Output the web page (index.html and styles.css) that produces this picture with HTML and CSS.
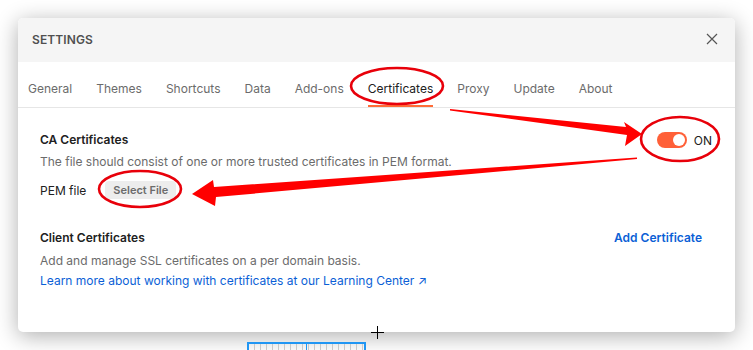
FILE: index.html
```html
<!DOCTYPE html>
<html lang="en">
<head>
    <meta charset="UTF-8">
    <meta name="viewport" content="width=device-width, initial-scale=1.0">
    <title>Settings - Certificates</title>
    <link rel="stylesheet" href="styles.css">
</head>
<body>

<div class="stage">
    <div class="modal">
        <div class="modal-header">
            <span class="modal-title">SETTINGS</span>
            <svg class="close-icon" width="12" height="12" viewBox="0 0 12 12">
                <path d="M1 1 L11 11 M11 1 L1 11" stroke="#555" stroke-width="1.2" fill="none"/>
            </svg>
        </div>

        <div class="tabs">
            <span class="tab">General</span>
            <span class="tab">Themes</span>
            <span class="tab">Shortcuts</span>
            <span class="tab">Data</span>
            <span class="tab">Add-ons</span>
            <span class="tab active">Certificates</span>
            <span class="tab">Proxy</span>
            <span class="tab">Update</span>
            <span class="tab">About</span>
        </div>

        <div class="content">
            <!-- CA certificates -->
            <div class="section">
                <div class="section-row">
                    <div>
                        <div class="section-title">CA Certificates</div>
                        <div class="section-desc">The file should consist of one or more trusted certificates in PEM format.</div>
                    </div>
                    <div class="toggle-wrap">
                        <span class="toggle"><span class="knob"></span></span>
                        <span class="toggle-label">ON</span>
                    </div>
                </div>
                <div class="pem-row">
                    <span class="pem-label">PEM file</span>
                    <span class="select-btn">Select File</span>
                </div>
            </div>

            <!-- Client certificates -->
            <div class="section client">
                <div class="section-row">
                    <div class="section-title">Client Certificates</div>
                    <span class="add-link">Add Certificate</span>
                </div>
                <div class="section-desc">Add and manage SSL certificates on a per domain basis.</div>
                <div class="learn-link">Learn more about working with certificates at our Learning Center &#8599;</div>
            </div>
        </div>
    </div>
</div>

<div class="ruler"></div>
<div class="cursor"></div>

<!-- red annotations drawn on top of the screenshot -->
<svg class="annotations" width="753" height="350" viewBox="0 0 753 350">
    <ellipse cx="397" cy="86" rx="46" ry="18" fill="none" stroke="#e8000a" stroke-width="2.6"/>
    <ellipse cx="680" cy="139" rx="39" ry="22" fill="none" stroke="#e8000a" stroke-width="2.6"/>
    <ellipse cx="140" cy="189" rx="41" ry="18" fill="none" stroke="#e8000a" stroke-width="2.6"/>
    <polygon points="450,109 626,127 624,122 642,134 625,146 627,135 450,110.5" fill="#f00"/>
    <polygon points="637,157.5 214,187 213,180 192,194 215,206 216,197 637,159" fill="#f00"/>
</svg>

</body>
</html>
```

FILE: styles.css
```css
/* General Reset */
* {
    margin: 0;
    padding: 0;
    box-sizing: border-box;
}

body {
    width: 753px;
    height: 350px;
    overflow: hidden;
    position: relative;
    background-color: #ffffff;
    font-family: Inter, "Noto Sans", sans-serif;
    color: #212121;
}

/* Modal */
.stage {
    padding: 18px;
}

.modal {
    width: 717px;
    height: 314px;
    background-color: #ffffff;
    border-radius: 5px;
    overflow: hidden;
    box-shadow: 0 4px 22px rgba(0, 0, 0, 0.32);
}

.modal-header {
    height: 44px;
    background-color: #f5f5f5;
    display: flex;
    align-items: center;
    justify-content: space-between;
    padding: 0 17px 2px 14px;
}

.modal-title {
    font-size: 12px;
    font-weight: 600;
    color: #505050;
    letter-spacing: 0.1px;
}

/* Tabs */
.tabs {
    height: 46px;
    display: flex;
    gap: 24px;
    padding: 0 10px;
    border-bottom: 1px solid #e6e6e6;
}

.tab {
    display: flex;
    align-items: center;
    padding-top: 10px;
    font-size: 12px;
    color: #6b6b6b;
    border-bottom: 2px solid transparent;
}

.tab.active {
    color: #212121;
    border-bottom-color: #ff6c37;
}

/* Content */
.content {
    padding: 24px 23px 0 22px;
}

.section-row {
    display: flex;
    justify-content: space-between;
    align-items: flex-start;
}

.section-title {
    font-size: 12px;
    font-weight: 600;
    line-height: 16px;
}

.section-desc {
    font-size: 12px;
    line-height: 16px;
    color: #6b6b6b;
    margin-top: 6px;
}

.toggle-wrap {
    display: flex;
    align-items: center;
    gap: 7px;
    margin-top: 0;
}

.toggle {
    width: 30px;
    height: 16px;
    border-radius: 8px;
    background-color: #ff6038;
    display: flex;
    justify-content: flex-end;
    align-items: center;
    padding: 2px;
}

.knob {
    width: 12px;
    height: 12px;
    border-radius: 50%;
    background-color: #ffffff;
}

.toggle-label {
    font-size: 12px;
    color: #212121;
}

.pem-row {
    display: flex;
    align-items: center;
    gap: 19px;
    margin-top: 11px;
}

.pem-label {
    font-size: 12px;
}

.select-btn {
    height: 18px;
    line-height: 18px;
    padding: 0 8px;
    border-radius: 4px;
    background-color: #ededed;
    font-size: 11px;
    font-weight: 600;
    color: #6b6b6b;
}

.section.client {
    margin-top: 31px;
}

.client .section-desc {
    margin-top: 7px;
}

.add-link {
    font-size: 12px;
    font-weight: 600;
    line-height: 16px;
    color: #0b5fd6;
    margin-right: 10px;
}

.learn-link {
    font-size: 12px;
    line-height: 16px;
    margin-top: 4px;
    color: #0b5fd6;
}

/* Things peeking out below the dialog */
.ruler {
    position: absolute;
    left: 247px;
    top: 342px;
    width: 119px;
    height: 12px;
    border: 2px solid #2196f3;
    border-bottom: none;
    background: repeating-linear-gradient(90deg, transparent 0 5px, #c8c8c8 5px 6px);
}

.ruler::after {
    content: "";
    position: absolute;
    left: 57px;
    top: 0;
    width: 1px;
    height: 10px;
    background-color: #2196f3;
}

.cursor {
    position: absolute;
    left: 371px;
    top: 326px;
    width: 13px;
    height: 13px;
    background:
        linear-gradient(#000, #000) center / 1px 100% no-repeat,
        linear-gradient(#000, #000) center / 100% 1px no-repeat;
}

.annotations {
    position: absolute;
    left: 0;
    top: 0;
}
```
